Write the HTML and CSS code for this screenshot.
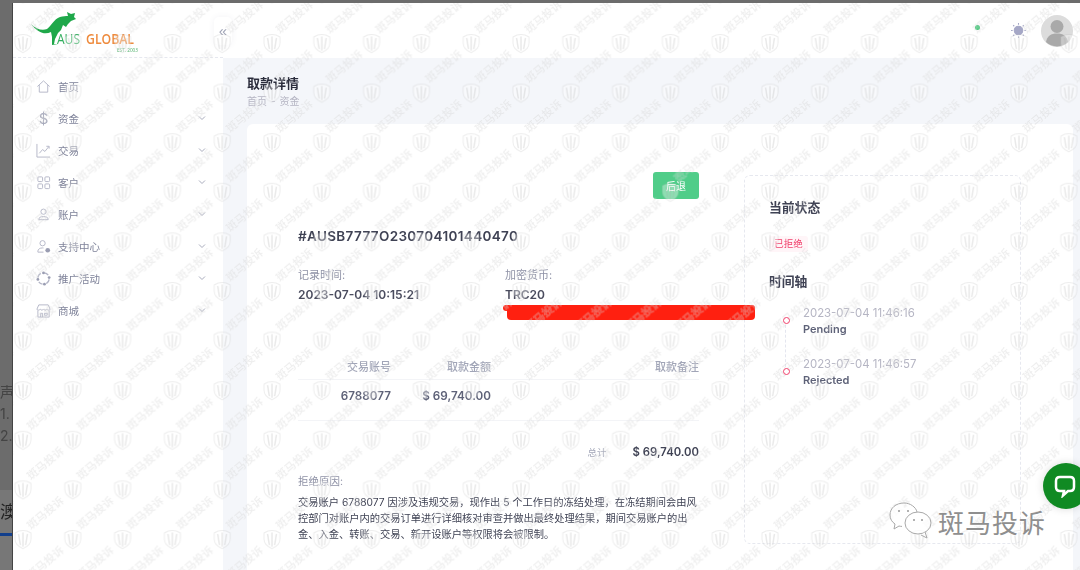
FILE: index.html
```html
<!DOCTYPE html>
<html lang="zh-CN">
<head>
  <meta charset="UTF-8">
  <title>取款详情</title>
  <link rel="stylesheet" href="styles.css">
</head>
<body>
  <div class="behind">
    <div class="behind-notes">
      <p>声明</p>
      <p>1.</p>
      <p>2.</p>
    </div>
    <div class="behind-tab">澳洲</div>
  </div>

  <div class="window">
    <aside class="sidebar">
      <div class="logo">
        <svg width="118" height="46" viewBox="0 0 118 46">
          <path class="roo" d="M1 13C6 18 12 20 17 18 21 15 24 8 30 6 33 5 36 5 38 5L37 1 41 3 45 2 44 6 46 8 41 10 38 13 36 16 33 14 31 19 28 22 25 28 24 33 28 33 22 34 22 26 21 21C15 24 8 22 1 13Z"/>
          <text class="logo-aus" x="27" y="33" textLength="23" lengthAdjust="spacingAndGlyphs">AUS</text>
          <text class="logo-global" x="56" y="33" textLength="48" lengthAdjust="spacingAndGlyphs">GLOBAL</text>
          <text class="logo-est" x="87" y="41" textLength="21" lengthAdjust="spacingAndGlyphs">EST. 2003</text>
        </svg>
      </div>
      <nav class="menu">
        <a class="menu-item">
          <svg class="menu-icon" viewBox="0 0 16 16"><path d="M1.500 8 8 2l6.500 6M3.500 6.500V14h9V6.500"/></svg>
          <span>首页</span>
        </a>
        <a class="menu-item">
          <span class="menu-icon dollar">$</span>
          <span>资金</span>
          <svg class="chevron" viewBox="0 0 8 8"><path d="M1 2.500 4 5.500 7 2.500"/></svg>
        </a>
        <a class="menu-item">
          <svg class="menu-icon" viewBox="0 0 16 16"><path d="M1 1v14h14M3.500 11l3.500-4 2.500 2 4-5M11 3.500h3V6"/></svg>
          <span>交易</span>
          <svg class="chevron" viewBox="0 0 8 8"><path d="M1 2.500 4 5.500 7 2.500"/></svg>
        </a>
        <a class="menu-item">
          <svg class="menu-icon" viewBox="0 0 16 16"><rect x="2" y="2" width="5" height="5" rx="1"/><rect x="9.500" y="2" width="5" height="5" rx="1"/><rect x="2" y="9.500" width="5" height="5" rx="1"/><rect x="9.500" y="9.500" width="5" height="5" rx="1"/></svg>
          <span>客户</span>
          <svg class="chevron" viewBox="0 0 8 8"><path d="M1 2.500 4 5.500 7 2.500"/></svg>
        </a>
        <a class="menu-item">
          <svg class="menu-icon" viewBox="0 0 16 16"><circle cx="8" cy="5" r="2.800"/><path d="M3 13.500V13c0-1.800 2-2.800 5-2.800s5 1 5 2.800v.5z"/></svg>
          <span>账户</span>
          <svg class="chevron" viewBox="0 0 8 8"><path d="M1 2.500 4 5.500 7 2.500"/></svg>
        </a>
        <a class="menu-item">
          <svg class="menu-icon" viewBox="0 0 16 16"><circle cx="7" cy="4.500" r="2.800"/><path d="M2 14v-1c0-2 2-3.500 5-3.500l1 .1M2 14h6"/><circle class="solid" cx="12.500" cy="12" r="2.500"/></svg>
          <span>支持中心</span>
          <svg class="chevron" viewBox="0 0 8 8"><path d="M1 2.500 4 5.500 7 2.500"/></svg>
        </a>
        <a class="menu-item">
          <svg class="menu-icon" viewBox="0 0 16 16"><path d="M5 2.500A6 6 0 0 0 2 7M3 11.500A6 6 0 0 0 7 14M11 13.500A6 6 0 0 0 14 9M13 4.500A6 6 0 0 0 9 2" class="thick"/><circle class="solid" cx="8" cy="2" r="1.500"/><circle class="solid" cx="2" cy="9" r="1.500"/><circle class="solid" cx="9" cy="14" r="1.500"/><circle class="solid" cx="14" cy="7" r="1.500"/></svg>
          <span>推广活动</span>
          <svg class="chevron" viewBox="0 0 8 8"><path d="M1 2.500 4 5.500 7 2.500"/></svg>
        </a>
        <a class="menu-item">
          <svg class="menu-icon" viewBox="0 0 16 16"><path d="M3 2h10l2 4.500c0 1.500-2.500 1.500-3.500 0-1 1.500-2.500 1.500-3.500 0-1 1.500-2.500 1.500-3.500 0-1 1.500-3.500 1.500-3.500 0zM2 8v7h12V8M5 15v-4h2v4M9 11h3v2H9z"/></svg>
          <span>商城</span>
          <svg class="chevron" viewBox="0 0 8 8"><path d="M1 2.500 4 5.500 7 2.500"/></svg>
        </a>
      </nav>
    </aside>

    <div class="main">
      <header class="topbar">
        <button class="collapse">«</button>
        <div class="topbar-right">
          <span class="online-dot"></span>
          <svg class="sun" viewBox="0 0 16 16"><circle cx="8" cy="8" r="4"/><path d="M8 1v1.500M8 13.500V15M1 8h1.500M13.500 8H15M3 3l1 1M12 12l1 1M3 13l1-1M12 4l1-1"/></svg>
          <svg class="avatar" viewBox="0 0 32 32"><circle cx="16" cy="16" r="16" fill="#dcdcdc"/><circle cx="16" cy="11.500" r="6.500" fill="#a9a9a9"/><path d="M5 27c1-6 5-8.500 11-8.500S26 21 27 27a16 16 0 0 1-22 0z" fill="#a9a9a9"/></svg>
        </div>
      </header>

      <div class="content">
        <div class="page-title">
          <h1>取款详情</h1>
          <div class="crumbs">首页<i>-</i>资金</div>
        </div>

        <section class="card">
          <div class="detail">
            <div class="detail-top"><button class="back-btn">后退</button></div>
            <h2 class="order-no">#AUSB7777O230704101440470</h2>

            <div class="info-row">
              <div class="info-col">
                <div class="info-label">记录时间:</div>
                <div class="info-value">2023-07-04 10:15:21</div>
              </div>
              <div class="info-col">
                <div class="info-label">加密货币:</div>
                <div class="info-value">TRC20</div>
                <div class="redacted"></div>
              </div>
            </div>

            <table class="amount-table">
              <thead>
                <tr><th class="col-account">交易账号</th><th class="col-amount">取款金额</th><th>取款备注</th></tr>
              </thead>
              <tbody>
                <tr><td>6788077</td><td>$ 69,740.00</td><td></td></tr>
              </tbody>
            </table>

            <div class="total"><span class="total-label">总计</span><span class="total-value">$ 69,740.00</span></div>

            <div class="reason-label">拒绝原因:</div>
            <p class="reason">交易账户 6788077 因涉及违规交易，现作出 5 个工作日的冻结处理，在冻结期间会由风控部门对账户内的交易订单进行详细核对审查并做出最终处理结果，期间交易账户的出金、入金、转账、交易、新开设账户等权限将会被限制。</p>
          </div>

          <div class="status-panel">
            <h3>当前状态</h3>
            <span class="badge-rejected">已拒绝</span>
            <h3 class="timeline-title">时间轴</h3>
            <ul class="timeline">
              <li><div class="tl-time">2023-07-04 11:46:16</div><div class="tl-text">Pending</div></li>
              <li><div class="tl-time">2023-07-04 11:46:57</div><div class="tl-text">Rejected</div></li>
            </ul>
          </div>
        </section>
      </div>
    </div>

    <!-- watermark sits over everything, icon and text tile separately -->
    <svg class="watermark" width="1068" height="567">
      <defs>
        <pattern id="wm-icon" x="0" y="30" width="49.800" height="49.600" patternUnits="userSpaceOnUse">
          <path class="wm-shield" d="M2 4c5-3 11-3 16 0v6c0 5-4 8-8 9.500C6 18 2 15 2 10z"/>
          <path class="wm-lines" d="M5.500 5c1 4 1 8 2 11M10 3.500v14M14.500 5c-1 4-1 8-2 11"/>
        </pattern>
        <pattern id="wm-text" x="10" y="-9" width="49.800" height="49.600" patternUnits="userSpaceOnUse">
          <text class="wm-text" transform="translate(8 40) rotate(-40)">斑马投诉</text>
        </pattern>
      </defs>
      <rect width="1068" height="567" fill="url(#wm-icon)"/>
      <rect width="1068" height="567" fill="url(#wm-text)"/>
    </svg>
  </div>

  <div class="chat-bubble">
    <svg width="24" height="24" viewBox="0 0 24 24"><path d="M7 3h10c2.500 0 4 1.500 4 4v6c0 2.500-1.500 4-4 4h-2l-5 4.500 1-4.500H7c-2.500 0-4-1.500-4-4V7c0-2.500 1.500-4 4-4z"/></svg>
  </div>

  <div class="source-mark">
    <svg width="44" height="38" viewBox="0 0 44 38">
      <path d="M15 1C7 1 1 6 1 13c0 4 2 7 5 9l-1 5 5-3c1 .3 2 .4 3 .4"/>
      <path d="M15 1c6 0 12 4 13 9"/>
      <ellipse cx="29" cy="21" rx="13" ry="11"/>
      <path d="M36 30l2 6-6-3"/>
      <circle class="eye" cx="10" cy="9" r="1"/><circle class="eye" cx="19" cy="9" r="1"/>
      <circle class="eye" cx="25" cy="18" r="1"/><circle class="eye" cx="33" cy="18" r="1"/>
    </svg>
    <span>斑马投诉</span>
  </div>
</body>
</html>
```

FILE: styles.css
```css
* {
  box-sizing: border-box;
}

html, body {
  margin: 0;
  height: 570px;
  overflow: hidden;
}

body {
  display: flex;
  position: relative;
  width: 1080px;
  padding-top: 3px;
  background-color: #6c6c6c;
  font-family: Inter, "Noto Sans CJK SC", sans-serif;
  color: #3f4254;
}

/* dimmed page behind the dialog */
.behind {
  display: flex;
  flex-direction: column;
  justify-content: space-between;
  flex: 0 0 12px;
  width: 12px;
  overflow: hidden;
  color: #3a3a3a;
  font-size: 14px;
  white-space: nowrap;
  filter: blur(0.4px);
}

.behind-notes {
  padding-top: 380px;
}

.behind-notes p {
  margin: 0 0 4px;
  line-height: 18px;
  color: #444;
}

.behind-tab {
  height: 80px;
  padding-top: 8px;
  background-color: #777;
  font-size: 17px;
  color: #222;
}

.behind-tab::after {
  content: "";
  display: block;
  width: 12px;
  height: 3px;
  margin-top: 10px;
  background-color: #123f8c;
}

.window {
  display: flex;
  position: relative;
  width: 1068px;
  height: 567px;
  overflow: hidden;
  border-left: 1px solid #444;
  background-color: #fff;
  filter: blur(0.45px);
}

.sidebar {
  flex: 0 0 210px;
  background-color: #fff;
}

.logo {
  height: 55px;
  padding: 8px 0 0 17px;
  border-bottom: 1px dashed #e6e8ef;
}

.roo {
  fill: #1fa84a;
}

.logo-aus {
  font: 500 15px "Open Sans", sans-serif;
  fill: #2fae5c;
}

.logo-global {
  font: 600 15px "Open Sans", sans-serif;
  fill: #ee8a3c;
}

.logo-est {
  font: 5px "Open Sans", sans-serif;
  fill: #4caf68;
}

.menu {
  padding-top: 12px;
}

.menu-item {
  display: flex;
  align-items: center;
  height: 32px;
  padding: 0 17px 0 23px;
  font-size: 10.500px;
  color: #7e8299;
}

.menu-item span:not(.menu-icon) {
  flex: 1;
}

.menu-icon {
  flex: 0 0 15px;
  width: 15px;
  height: 15px;
  margin-right: 7px;
  fill: none;
  stroke: #b3b5c6;
  stroke-width: 1;
}

.menu-icon .solid {
  fill: #9a9db2;
  stroke: none;
}

.menu-icon .thick {
  stroke-width: 1.500;
}

.dollar {
  font-size: 15px;
  line-height: 15px;
  text-align: center;
  color: #a5a8ba;
}

.chevron {
  width: 8px;
  height: 8px;
  fill: none;
  stroke: #a9acbd;
  stroke-width: 1;
}

.main {
  display: flex;
  flex-direction: column;
  flex: 1;
  min-width: 0;
}

.topbar {
  display: flex;
  align-items: center;
  justify-content: space-between;
  flex: 0 0 55px;
  background-color: #fff;
}

.collapse {
  width: 18px;
  height: 28px;
  padding: 0;
  border: none;
  border-radius: 5px;
  background-color: #fff;
  box-shadow: 0 0 6px rgba(80, 90, 130, 0.07);
  font-size: 15px;
  color: #a1a5b7;
  margin-left: -9px;
}

.topbar-right {
  display: flex;
  align-items: center;
  padding-right: 7px;
}

.online-dot {
  width: 5px;
  height: 5px;
  margin: -6px 30px 0 0;
  border-radius: 50%;
  background-color: #35c46f;
}

.sun {
  width: 17px;
  height: 17px;
  margin-right: 14px;
  fill: #a5a7c6;
  stroke: #a5a7c6;
  stroke-width: 1;
}

.avatar {
  width: 32px;
  height: 32px;
}

.content {
  flex: 1;
  padding: 0 7px 0 24px;
  background-color: #f4f6fa;
}

.page-title {
  height: 66px;
  padding-top: 16px;
}

.page-title h1 {
  margin: 0;
  font-size: 13px;
  line-height: 18px;
  font-weight: 700;
  color: #2b2d3c;
}

.crumbs {
  margin-top: 2px;
  font-size: 10px;
  line-height: 14px;
  color: #b5b5c3;
}

.crumbs i {
  margin: 0 4px;
  font-style: normal;
}

.card {
  display: flex;
  justify-content: space-between;
  height: 460px;
  padding: 51px 52px 0 51px;
  border-radius: 6px 6px 0 0;
  background-color: #fff;
}

.detail {
  flex: 0 0 401px;
  min-width: 0;
}

.detail-top {
  display: flex;
  justify-content: flex-end;
  margin-top: -3px;
}

.back-btn {
  width: 46px;
  height: 27px;
  padding: 0;
  border: none;
  border-radius: 3px;
  background-color: #50cd89;
  font: 10px "Noto Sans CJK SC", sans-serif;
  color: #fff;
}

.order-no {
  margin: 28px 0 0;
  font-size: 13.500px;
  line-height: 18px;
  font-weight: 600;
  letter-spacing: 0.35px;
  color: #3f4254;
}

.info-row {
  display: flex;
  margin-top: 23px;
}

.info-col {
  flex: 0 0 207px;
  min-width: 0;
}

.info-label {
  font-size: 11px;
  line-height: 14px;
  color: #8f92a6;
}

.info-value {
  margin-top: 6px;
  font-size: 12px;
  line-height: 14px;
  font-weight: 600;
  color: #4a4c5e;
}

.redacted {
  position: relative;
  width: 248px;
  height: 14px;
  margin: 4px 0 0 2px;
  border-radius: 4px;
  background-color: #ff2010;
}

.redacted::before {
  content: "";
  position: absolute;
  left: -4px;
  top: -1px;
  width: 252px;
  height: 6px;
  border-radius: 3px;
  background-color: #ff2010;
}

.amount-table {
  width: 100%;
  margin-top: 34px;
  border-collapse: collapse;
  table-layout: fixed;
}

.amount-table th {
  height: 25px;
  padding: 0 0 1px;
  border-bottom: 1px solid #f3f4f7;
  text-align: right;
  font-size: 11px;
  font-weight: 500;
  color: #a1a5b7;
}

.col-account {
  width: 93px;
}

.col-amount {
  width: 100px;
}

.amount-table td {
  height: 41px;
  padding: 0 0 8px;
  border-bottom: 1px solid #f3f4f7;
  text-align: right;
  font-size: 11.700px;
  font-weight: 600;
  color: #5e6278;
}

.total {
  display: flex;
  justify-content: flex-end;
  align-items: center;
  height: 16px;
  margin-top: 23px;
}

.total-label {
  width: 45px;
  font-size: 9.500px;
  color: #a1a5b7;
}

.total-value {
  font-size: 11.300px;
  font-weight: 600;
  color: #3f4254;
}

.reason-label {
  margin-top: 15px;
  font-size: 10.500px;
  line-height: 14px;
  color: #8f92a6;
}

.reason {
  margin: 5px 0 0;
  font-size: 10.250px;
  line-height: 16px;
  color: #3f4254;
}

.status-panel {
  flex: 0 0 277px;
  height: 369px;
  padding: 23px 23px 0 24px;
  border: 1px dashed #e6e8ef;
  border-radius: 6px;
}

.status-panel h3 {
  margin: 0;
  font-size: 12.800px;
  line-height: 18px;
  font-weight: 600;
  color: #3f4254;
}

.badge-rejected {
  display: inline-block;
  width: 39px;
  height: 16px;
  margin-top: 19px;
  border-radius: 3px;
  background-color: #fff5f8;
  text-align: center;
  font-size: 9.500px;
  line-height: 16px;
  color: #f1416c;
}

.status-panel .timeline-title {
  margin-top: 21px;
}

.timeline {
  margin: 15px 0 0;
  padding: 0 0 0 34px;
  list-style: none;
}

.timeline li {
  position: relative;
  height: 51px;
}

.timeline li::before {
  content: "";
  position: absolute;
  left: -20px;
  top: 11px;
  z-index: 1;
  width: 5px;
  height: 5px;
  border: 1px solid #f1416c;
  border-radius: 50%;
  background-color: #fff;
}

.timeline li:first-child::after {
  content: "";
  position: absolute;
  left: -18px;
  top: 14px;
  height: 52px;
  border-left: 1px dashed #e4e6ef;
}

.tl-time {
  font-size: 11.400px;
  line-height: 14px;
  color: #b5b5c3;
}

.tl-text {
  margin-top: 2px;
  font-size: 11px;
  line-height: 14px;
  font-weight: 600;
  color: #5e6278;
}

/* overlays */
.watermark {
  position: absolute;
  left: 0;
  top: 0;
  pointer-events: none;
}

.wm-shield {
  fill: rgba(255, 255, 255, 0.35);
  stroke: rgba(165, 165, 165, 0.2);
  stroke-width: 1;
}

.wm-lines {
  fill: none;
  stroke: rgba(165, 165, 165, 0.24);
  stroke-width: 1.500;
}

.wm-text {
  font: 500 11px "Noto Sans CJK SC", sans-serif;
  fill: rgba(165, 165, 165, 0.2);
  stroke: rgba(255, 255, 255, 0.35);
  stroke-width: 0.5px;
  paint-order: stroke;
}

.chat-bubble {
  display: flex;
  align-items: center;
  justify-content: center;
  position: absolute;
  left: 1043px;
  top: 463px;
  width: 46px;
  height: 46px;
  border-radius: 50%;
  background-color: #108a23;
  box-shadow: 0 0 8px rgba(0, 0, 0, 0.15);
}

.chat-bubble svg {
  fill: none;
  stroke: #fff;
  stroke-width: 2.500;
  margin-left: -2px;
}

.source-mark {
  display: flex;
  align-items: center;
  position: absolute;
  left: 889px;
  top: 502px;
  gap: 5px;
}

.source-mark svg {
  fill: rgba(255, 255, 255, 0.7);
  stroke: #a9a9a9;
  stroke-width: 1;
}

.source-mark .eye {
  fill: #999;
  stroke: none;
}

.source-mark span {
  font: 400 26px "Noto Sans CJK SC", sans-serif;
  letter-spacing: 1px;
  color: #8f8f8f;
  text-shadow: 1px 1px 0 #fff;
}
```
